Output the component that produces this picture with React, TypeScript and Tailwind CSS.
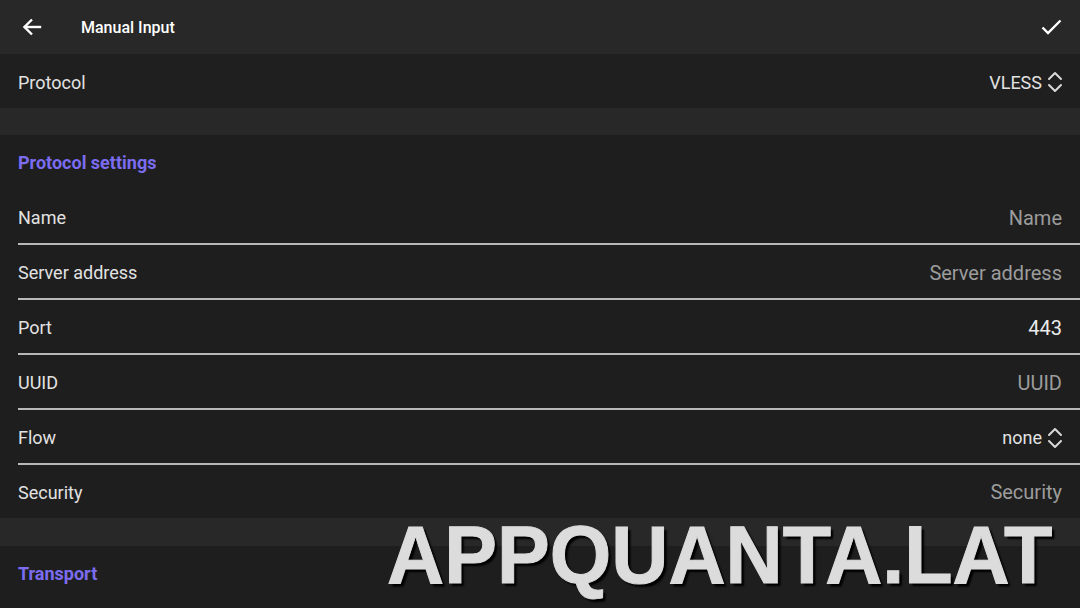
import React from "react";

const font = { fontFamily: "Roboto, 'Noto Sans', sans-serif" };

function UpDown() {
  return (
    <svg width="16" height="22" viewBox="0 0 16 22" fill="none" stroke="#d8d8d8" strokeWidth="2" strokeLinecap="round" strokeLinejoin="round">
      <path d="M2 8 L8 2 L14 8" />
      <path d="M2 14 L8 20 L14 14" />
    </svg>
  );
}

type Row = { label: string; value: string; kind: "placeholder" | "value" | "select"; line: boolean };

const rows: Row[] = [
  { label: "Name", value: "Name", kind: "placeholder", line: true },
  { label: "Server address", value: "Server address", kind: "placeholder", line: true },
  { label: "Port", value: "443", kind: "value", line: true },
  { label: "UUID", value: "UUID", kind: "placeholder", line: true },
  { label: "Flow", value: "none", kind: "select", line: true },
  { label: "Security", value: "Security", kind: "placeholder", line: false },
];

function FieldRow({ r }: { r: Row }) {
  return (
    <div className={`relative flex items-center justify-between pl-[18px] pr-[17px] ${r.line ? "h-[55px]" : "h-[53px] pt-[1px]"}`}>
      <span className="text-[18px] text-[#e2e2e2]">{r.label}</span>
      {r.kind === "select" ? (
        <span className="flex items-center gap-[5px] text-[18px] text-[#e2e2e2]">
          {r.value}
          <UpDown />
        </span>
      ) : (
        <span className={`pr-[1px] text-[20px] ${r.kind === "value" ? "text-[#ececec]" : "text-[#9c9c9c]"}`}>{r.value}</span>
      )}
      {r.line && <div className="absolute bottom-[0px] left-[18px] right-0 h-[2px] bg-[#b8b8b8]" />}
    </div>
  );
}

export default function App() {
  return (
    <div className="relative h-[608px] w-[1080px] overflow-hidden bg-[#1e1e1e]" style={font}>
      {/* top bar */}
      <div className="flex h-[54px] items-center bg-[#282828] pl-[22px] pr-[18px]">
        <svg width="20" height="20" viewBox="0 0 20 20" fill="none" stroke="#ffffff" strokeWidth="2.4" strokeLinecap="square">
          <path d="M18 10 H3" />
          <path d="M10 2.5 L2.5 10 L10 17.5" strokeLinecap="butt" />
        </svg>
        <span className="ml-[39px] pt-[2px] text-[16px] font-medium text-white">Manual Input</span>
        <svg className="ml-auto" width="21" height="18" viewBox="0 0 21 18" fill="none" stroke="#ffffff" strokeWidth="2.4">
          <path d="M1.5 9.5 L7 15 L19.5 2.5" />
        </svg>
      </div>

      {/* protocol */}
      <div className="flex h-[54px] items-center justify-between bg-[#1f1f1f] pl-[18px] pr-[17px] pt-[2px]">
        <span className="text-[18px] text-[#e2e2e2]">Protocol</span>
        <span className="flex items-center gap-[5px] text-[18px] text-[#e2e2e2]">
          VLESS
          <UpDown />
        </span>
      </div>

      <div className="h-[27px] bg-[#282828]" />

      {/* protocol settings */}
      <div className="bg-[#1e1e1e]">
        <div className="flex h-[55px] items-center pl-[18px] text-[18px] font-bold text-[#7b6cf0]">Protocol settings</div>
        {rows.map((r) => (
          <FieldRow key={r.label} r={r} />
        ))}
      </div>

      <div className="h-[28px] bg-[#282828]" />

      <div className="bg-[#1e1e1e]">
        <div className="flex h-[55px] items-center pl-[18px] text-[18px] font-bold text-[#7b6cf0]">Transport</div>
      </div>

      {/* watermark */}
      <div
        className="absolute left-[387px] top-[514px] origin-left text-[82px] font-bold leading-none text-[#dcdcdc]"
        style={{
          fontFamily: "'Liberation Sans', Arial, sans-serif",
          textShadow: "3px 3px 2px #000000",
          transform: "scaleX(0.965)",
          WebkitTextStroke: "1px #dcdcdc",
        }}
      >
        APPQUANTA.LAT
      </div>
    </div>
  );
}
